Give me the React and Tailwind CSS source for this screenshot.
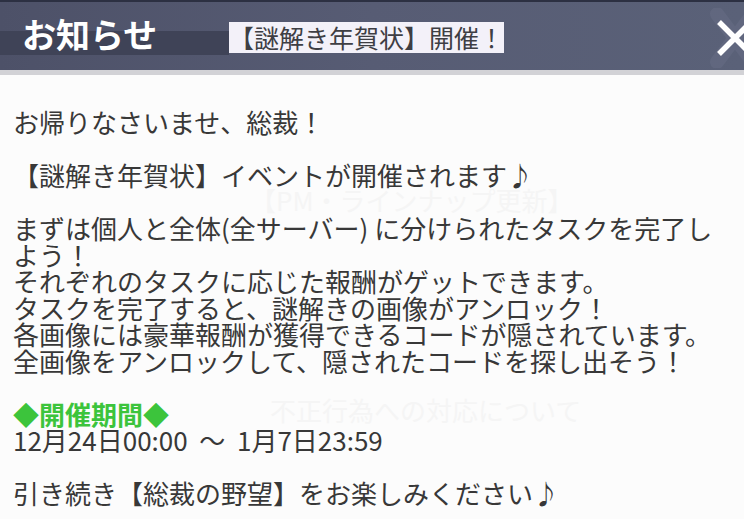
import React from "react";

const lines = [
  { text: "お帰りなさいませ、総裁！" },
  { blank: true },
  { text: "【謎解き年賀状】イベントが開催されます♪" },
  { blank: true },
  { text: "まずは個人と全体(全サーバー) に分けられたタスクを完了し" },
  { text: "よう！" },
  { text: "それぞれのタスクに応じた報酬がゲットできます。" },
  { text: "タスクを完了すると、謎解きの画像がアンロック！" },
  { text: "各画像には豪華報酬が獲得できるコードが隠されています。" },
  { text: "全画像をアンロックして、隠されたコードを探し出そう！" },
  { blank: true },
  { text: "◆開催期間◆", green: true },
  { text: "12月24日00:00\u00a0\u00a0～\u00a0\u00a01月7日23:59" },
  { blank: true },
  { text: "引き続き【総裁の野望】をお楽しみください♪" },
];

const CloseIcon = () => (
  <svg width="60" height="60" viewBox="0 0 60 60" className="absolute right-[-21px] top-[6px]">
    {/* 後ろの薄いX */}
    <path d="M12 6 L48 54 M48 6 L12 54" stroke="#6a7088" strokeWidth="14" strokeLinecap="round" opacity="0.45" />
    <path d="M14 14 L46 46 M46 14 L14 46" stroke="#ffffff" strokeWidth="5.5" />
  </svg>
);

export default function App() {
  return (
    <div className="relative w-[744px] h-[519px] overflow-hidden bg-[#fcfcfc] font-['Noto_Sans_CJK_JP','Noto_Sans',sans-serif]">
      {/* ヘッダー */}
      <div className="relative flex flex-col h-[75px] border-t-[2px] border-[#2c3042] bg-gradient-to-r from-[#4d5168] via-[#575c74] to-[#5a6178]">
        <div className="flex flex-1 items-center">
          <div className="flex h-full w-[229px] items-center pl-[22px] bg-[linear-gradient(to_bottom,transparent_29px,#3f4357_29px,#3f4357_53px,transparent_53px)]">
            <span className="-mt-[4px] text-[34px] leading-[34px] font-bold text-white">
              お知らせ
            </span>
          </div>
          <span className="mt-[2px] h-[31px] w-[275px] bg-[#f3f1f9] text-[25px] leading-[31px] text-[#3e3e44] whitespace-nowrap">
            【謎解き年賀状】開催！
          </span>
        </div>
        <div className="h-[5px] bg-[#d2d2d6]" />
        <CloseIcon />
      </div>

      {/* 背景の薄い文字 */}
      <div className="absolute left-[250px] top-[180px] text-[26px] text-[#f5f5f5] whitespace-nowrap">
        【PM・ラインナップ更新】
      </div>
      <div className="absolute left-[270px] top-[390px] text-[26px] text-[#f5f5f5] whitespace-nowrap">
        不正行為への対応について
      </div>

      {/* 本文 */}
      <div className="relative flex flex-col pt-[34px] pl-[13px] text-[26px] leading-[26.5px] text-[#383838]">
        {lines.map((line, i) =>
          line.blank ? (
            <div key={i} className="h-[26.5px]" />
          ) : (
            <div
              key={i}
              className={`whitespace-nowrap ${line.green ? "text-[#3cc43c] font-bold" : ""}`}
            >
              {line.text}
            </div>
          )
        )}
      </div>
    </div>
  );
}
